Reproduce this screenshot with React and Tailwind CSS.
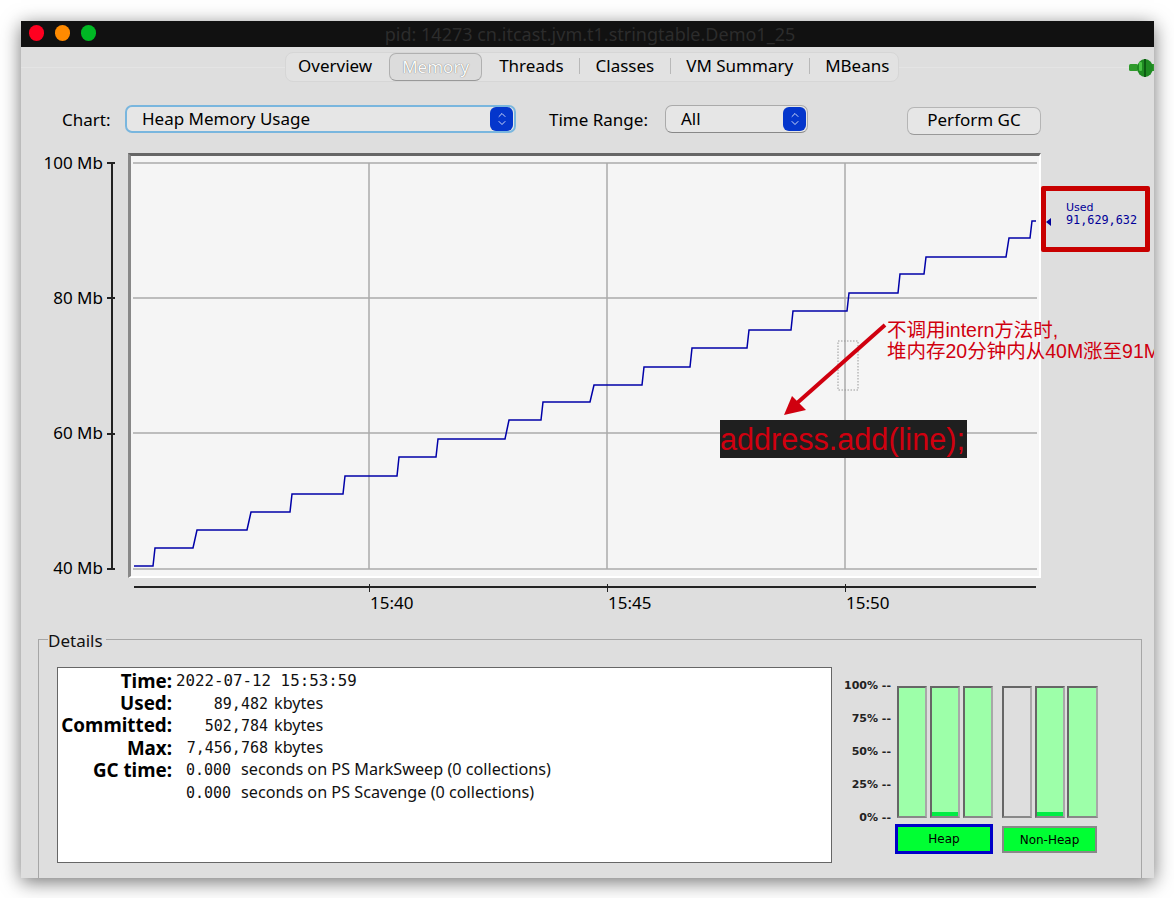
import { ChevronUp, ChevronDown } from "lucide-react";

const uiFont = "font-['Noto_Sans','DejaVu_Sans',sans-serif]";
const monoFont = "font-['DejaVu_Sans_Mono',monospace]";

const steps =
  "134,566 153,566 155,548 193,548 197,530 247,530 251,512 290,512 292,494 343,494 345,476 397,476 399,457 436,457 438,439 505,439 509,420 541,420 543,402 590,402 594,385 642,385 644,367 690,367 692,348 747,348 749,330 791,330 793,311 847,311 849,293 898,293 900,274 924,274 926,257 1006,257 1009,238 1030,238 1032,221 1036,221";

const tabs = ["Overview", "Memory", "Threads", "Classes", "VM Summary", "MBeans"];
const yLabels = ["100 Mb", "80 Mb", "60 Mb", "40 Mb"];
const pctLabels = ["100%", "75%", "50%", "25%", "0%"];

const Stepper = () => (
  <span className="ml-auto mr-[1px] w-[23px] h-[24px] rounded-[6px] bg-[#0436cc] flex flex-col items-center justify-center text-white">
    <ChevronUp size={12} strokeWidth={1.6} className="-mb-[2px]" />
    <ChevronDown size={12} strokeWidth={1.6} className="-mt-[2px]" />
  </span>
);

const Bar = ({ fill = "bg-[#9dffa9]", low }) => (
  <div className={`w-[30.3px] h-[132px] border-2 border-[#666] border-r-[#a8a8a8] border-b-[#888] flex flex-col justify-end ${fill}`}>
    {low && <div className="h-[4px] bg-[#00ee44]" />}
  </div>
);

const DetailRow = ({ label, children }) => (
  <div className="flex items-center h-[22.2px]">
    <span className="w-[113px] text-right font-bold text-[18.8px] leading-[20px] text-black shrink-0 whitespace-nowrap">{label}</span>
    {children}
  </div>
);

const Kbytes = ({ value }) => (
  <div className="flex items-baseline text-[16.2px] leading-[20px] text-[#111]">
    <span className={`w-[91px] ml-[5px] text-right text-[15px] ${monoFont}`}>{value}</span>
    <span className="ml-[6px]">kbytes</span>
  </div>
);

const Gc = ({ text }) => (
  <div className="flex items-baseline text-[16.2px] leading-[20px] text-[#111] ml-[14px]">
    <span className={`${monoFont} text-[15px] w-[55px]`}>0.000</span>
    <span>{text}</span>
  </div>
);

export default function App() {
  return (
    <div className={`w-[1174px] h-[898px] bg-white pl-[21px] pt-[21px] overflow-hidden ${uiFont}`}>
      <div className="relative w-[1133px] h-[857px] flex flex-col overflow-hidden bg-[#dedede] shadow-[0_4px_18px_rgba(0,0,0,0.55)]">
        {/* title bar */}
        <div className="relative h-[26px] shrink-0 bg-[#111111] flex items-center justify-center">
          <div className="absolute left-[8px] top-[4px] flex gap-[11px]">
            <span className="w-[15px] h-[16px] rounded-full bg-[#ff0020]" />
            <span className="w-[15px] h-[16px] rounded-full bg-[#ff8a00]" />
            <span className="w-[15px] h-[16px] rounded-full bg-[#00b824]" />
          </div>
          <span className="text-[#2c2c2c] text-[18px] leading-[24px] -mt-[1px] pl-[5px]">pid: 14273 cn.itcast.jvm.t1.stringtable.Demo1_25</span>
        </div>

        {/* tabs */}
        <div className="relative mt-[5px] h-[30px] shrink-0 flex items-center pl-[264px]">
          <div className="absolute left-0 right-0 top-[15px] h-px bg-[#e4e4e4]" />
          <div className="relative flex items-center h-[30px] w-[614px] rounded-[8px] bg-[#e2e2e2] border border-[#d6d6d6] pl-[12px] text-[17px] leading-[24px] text-black">
            {tabs.map((t, i) => (
              <div key={t} className="flex items-center -mt-[2px]">
                {t === "Memory" ? (
                  <span className="ml-[17px] mr-[17px] mt-[2px] w-[93px] h-[28px] rounded-[7px] bg-[#dcdcdc] border border-[#b0b0b0] border-b-[#999] flex items-center justify-center text-[#fafafa] [text-shadow:0_0_1px_#555]">
                    {t}
                  </span>
                ) : (
                  <span>{t}</span>
                )}
                {i > 1 && i < 5 && <span className="mx-[15.5px] w-px h-[16px] bg-[#b8b8b8]" />}
              </div>
            ))}
          </div>
          <svg className="absolute right-0 top-[7px]" width="25" height="18" viewBox="0 0 25 18">
            <rect x="0" y="5" width="9" height="7" rx="1.5" fill="#2f9a2c" />
            <rect x="22" y="5" width="3" height="7" fill="#2f9a2c" />
            <ellipse cx="16" cy="9" rx="8" ry="9" fill="#1f8a22" />
            <rect x="15" y="0" width="2" height="18" fill="#0c5a12" />
            <rect x="10" y="3" width="3" height="9" rx="1" fill="#49c244" />
          </svg>
        </div>

        {/* chart controls */}
        <div className="mt-[23px] h-[30px] shrink-0 flex items-center pl-[41px] text-[17px] leading-[24px] text-black">
          <span className="w-[63px]">Chart:</span>
          <div className="w-[391px] h-[28px] rounded-[7px] bg-[#e6e6e6] border-2 border-[#79b6de] flex items-center pl-[15px] -mt-[2px]">
            <span className="-mt-[1px]">Heap Memory Usage</span>
            <Stepper />
          </div>
          <span className="ml-[33px] w-[116px]">Time Range:</span>
          <div className="w-[143px] h-[28px] rounded-[7px] bg-[#e6e6e6] border border-[#aaa] border-b-[#888] flex items-center pl-[15px] -mt-[2px]">
            <span className="-mt-[1px]">All</span>
            <Stepper />
          </div>
          <button className="ml-[99px] mt-[1px] w-[134px] h-[28px] rounded-[7px] bg-[#e6e6e6] border border-[#b5b5b5] border-b-[#999]">
            <span className="block -mt-[1px]">Perform GC</span>
          </button>
        </div>

        {/* chart */}
        <div className="mt-[18px] flex shrink-0">
          <div className="relative w-[107px] h-[425px] text-[17px] leading-[24px] text-black">
            <div className="absolute left-[89.5px] top-[10px] h-[406px] w-[2px] bg-[#222]" />
            <div className="flex flex-col justify-between items-end h-[426px] pr-[13px]">
              {yLabels.map((l) => (
                <div key={l} className="flex items-center h-[20px]">
                  <span className="-mt-[1px]">{l}</span>
                  <span className="ml-[4px] w-[8px] h-[2px] bg-[#222]" />
                </div>
              ))}
            </div>
          </div>

          <div className="relative w-[913px] h-[425px] bg-[#f5f5f5] border-t-[3px] border-l-[3px] border-t-[#666] border-l-[#888] border-r-2 border-b-2 border-r-white border-b-white box-border">
            <svg className="absolute -left-[3px] -top-[3px]" width="913" height="425" viewBox="128 153 913 425">
              <g stroke="#ababab" strokeWidth="1.5" fill="none">
                <path d="M133 163H1037M133 298H1037M133 433H1037M133 569H1037" />
                <path d="M369 163V569M607 163V569M845 163V569" />
              </g>
              <polyline points={steps} fill="none" stroke="#0000a8" strokeWidth="1.5" />
              <rect x="838" y="341" width="20" height="49" fill="none" stroke="#999" strokeDasharray="1.5 1.5" />
              <path d="M885 325L796 404" stroke="#d0000f" strokeWidth="4" fill="none" />
              <path d="M784 415L792 396L806 410Z" fill="#d0000f" />
            </svg>
            <div className="absolute left-[756px] top-[164px] leading-[21px] text-[19.5px] text-[#d0000f] whitespace-nowrap font-['Liberation_Sans','Noto_Sans_CJK_SC',sans-serif]">
              <div>不调用intern方法时,</div>
              <div>堆内存20分钟内从40M涨至91M</div>
            </div>
            <div className="absolute left-[589px] top-[264px] w-[247px] h-[38px] bg-[#1f1f1f] text-[#d0000f] text-[30.6px] leading-[38px] whitespace-nowrap font-['Liberation_Sans',sans-serif]">
              address.add(line);
            </div>
          </div>

          <div className="mt-[33px] w-[109px] h-[66px] border-[5px] border-[#c80000] rounded-[2px] relative text-[#000098] leading-[13px] pl-[20px] pt-[10px] shrink-0">
            <span className="absolute left-0 top-[27px] w-0 h-0 border-y-[4px] border-y-transparent border-r-[5px] border-r-[#000098]" />
            <div className="font-['DejaVu_Sans',sans-serif] text-[11px]">Used</div>
            <div className={`${monoFont} text-[11.8px]`}>91,629,632</div>
          </div>
        </div>

        {/* time axis */}
        <div className="ml-[113px] w-[902px] mt-[8px] h-[2px] bg-[#222] shrink-0" />
        <div className="ml-[113px] flex h-[26px] shrink-0 text-[17px] leading-[24px] text-black">
          <div className="w-[235px]" />
          {["15:40", "15:45", "15:50"].map((t) => (
            <div key={t} className="relative w-[238px] pl-[1px] pt-[3px]">
              <span className="absolute left-0 -top-[4px] w-px h-[8px] bg-[#222]" />
              {t}
            </div>
          ))}
        </div>

        {/* details */}
        <fieldset className="ml-[17px] mt-[15px] w-[1104px] h-[300px] border border-[#a6a6a6] shrink-0">
          <legend className="ml-[9px] pr-[3px] text-[17px] leading-[20px] text-[#111]">
            <span className="relative top-[2px]">Details</span>
          </legend>
          <div className="flex mt-[18px] ml-[18px]">
            <div className="w-[775px] h-[196px] bg-white border border-[#666] pt-[2px] pl-[1px]">
              <DetailRow label="Time:">
                <span className={`ml-[4px] text-[15.8px] leading-[20px] text-[#111] ${monoFont}`}>2022-07-12 15:53:59</span>
              </DetailRow>
              <DetailRow label="Used:"><Kbytes value="89,482" /></DetailRow>
              <DetailRow label="Committed:"><Kbytes value="502,784" /></DetailRow>
              <DetailRow label="Max:"><Kbytes value="7,456,768" /></DetailRow>
              <DetailRow label="GC time:"><Gc text="seconds on PS MarkSweep (0 collections)" /></DetailRow>
              <DetailRow label=""><Gc text="seconds on PS Scavenge (0 collections)" /></DetailRow>
            </div>

            <div className="ml-[12px] flex">
              <div className="w-[47px] mt-[12px] h-[146px] flex flex-col justify-between items-end font-['DejaVu_Sans',sans-serif] text-[11px] text-[#222] font-semibold">
                {pctLabels.map((p) => (
                  <div key={p} className="h-[14px] leading-[14px] whitespace-nowrap">{p} --</div>
                ))}
              </div>
              <div className="ml-[6px] mt-[19px]">
                <div className="flex gap-[2.5px]">
                  <Bar /><Bar low /><Bar />
                  <div className="w-[4px]" />
                  <Bar fill="bg-transparent" /><Bar low /><Bar />
                </div>
                <div className="flex mt-[6px] -ml-[2px] font-['DejaVu_Sans',sans-serif] text-[12px] text-black">
                  <div className="w-[98px] h-[30px] bg-[#00ff33] border-[3px] border-[#0000c8] flex items-center justify-center">Heap</div>
                  <div className="ml-[9px] mt-[2px] w-[95px] h-[27px] bg-[#00ff33] border-2 border-[#888] flex items-center justify-center">Non-Heap</div>
                </div>
              </div>
            </div>
          </div>
        </fieldset>
      </div>
    </div>
  );
}
